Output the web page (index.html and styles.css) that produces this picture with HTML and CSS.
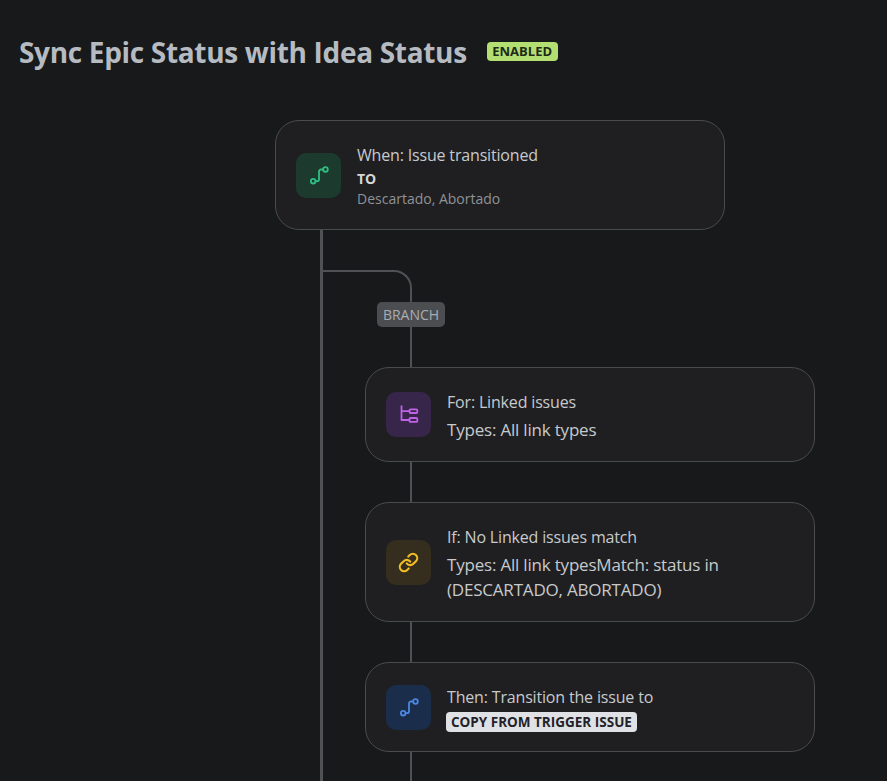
FILE: index.html
```html
<!DOCTYPE html>
<html lang="en">
<head>
    <meta charset="UTF-8">
    <meta name="viewport" content="width=device-width, initial-scale=1.0">
    <title>Sync Epic Status with Idea Status</title>
    <link rel="stylesheet" href="styles.css">
</head>
<body>
    <div class="header">
        <h1 class="title">Sync Epic Status with Idea Status</h1>
        <span class="status">ENABLED</span>
    </div>

    <div class="flow">
        <div class="card card-trigger">
            <div class="icon icon-green">
                <svg viewBox="0 0 24 24" width="24" height="24"><circle cx="6.2" cy="18.2" r="2.3"/><circle cx="18.5" cy="6.5" r="2.3"/><path d="M8.5 18.2H10a2 2 0 0 0 2-2V8.500a2 2 0 0 1 2-2h2.200"/></svg>
            </div>
            <div class="card-text">
                <div class="line">When: Issue transitioned</div>
                <div class="label">TO</div>
                <div class="muted">Descartado, Abortado</div>
            </div>
        </div>

        <div class="trunk">
            <div class="branch">
                <div class="branch-curve"></div>
                <div class="branch-tag"><span class="tag">BRANCH</span></div>
                <div class="link"></div>

                <div class="card card-for">
                    <div class="icon icon-purple">
                        <svg viewBox="0 0 24 24" width="24" height="24"><path d="M4.5 3.200V17h8M4.5 8.200h8"/><rect x="12.5" y="6.400" width="7.800" height="3.600" rx="1"/><rect x="12.5" y="15" width="7.800" height="3.900" rx="1"/></svg>
                    </div>
                    <div class="card-text">
                        <div class="line">For: Linked issues</div>
                        <div class="line detail">Types: All link types</div>
                    </div>
                </div>
                <div class="link"></div>

                <div class="card card-if">
                    <div class="icon icon-yellow">
                        <svg class="icon-chain" viewBox="0 0 24 24" width="21" height="21"><path d="M10 13a5 5 0 0 0 7.54.54l3-3a5 5 0 0 0-7.07-7.07l-1.72 1.71"/><path d="M14 11a5 5 0 0 0-7.54-.54l-3 3a5 5 0 0 0 7.07 7.07l1.71-1.71"/></svg>
                    </div>
                    <div class="card-text">
                        <div class="line">If: No Linked issues match</div>
                        <div class="line detail">Types: All link typesMatch: status in (DESCARTADO, ABORTADO)</div>
                    </div>
                </div>
                <div class="link"></div>

                <div class="card card-then">
                    <div class="icon icon-blue">
                        <svg viewBox="0 0 24 24" width="24" height="24"><circle cx="6.2" cy="18.2" r="2.3"/><circle cx="18.5" cy="6.5" r="2.3"/><path d="M8.5 18.2H10a2 2 0 0 0 2-2V8.500a2 2 0 0 1 2-2h2.200"/></svg>
                    </div>
                    <div class="card-text">
                        <div class="line">Then: Transition the issue to</div>
                        <span class="lozenge">COPY FROM TRIGGER ISSUE</span>
                    </div>
                </div>
                <div class="link link-end"></div>
            </div>
        </div>
    </div>
</body>
</html>
```

FILE: styles.css
```css
body {
    font-family: "Open Sans", "Noto Sans", sans-serif;
    background-color: #18191b;
    color: #c7cacd;
    margin: 0;
}
.header {
    display: flex;
    align-items: center;
    gap: 20px;
    height: 40px;
    padding: 32px 0 0 19px;
    margin-bottom: 48px;
}
.title {
    font-size: 28px;
    font-weight: 700;
    letter-spacing: -0.32px;
    color: #b6bbc1;
    margin: 0;
}
.status {
    background: #b3df72;
    color: #1e2a16;
    font-size: 13px;
    font-weight: 700;
    line-height: 19px;
    padding: 0 5.5px;
    border-radius: 4px;
    margin-top: -2px;
}
.flow {
    margin-left: 275px;
}
.card {
    display: flex;
    align-items: center;
    gap: 16px;
    box-sizing: border-box;
    width: 450px;
    padding: 0 20px;
    background: #1f1f21;
    border: 1px solid #4a4b4d;
    border-radius: 24px;
}
.card-trigger { height: 110px; }
.card-for { height: 95px; }
.card-if { height: 120px; }
.card-then { height: 90px; }
.icon {
    flex: none;
    width: 45px;
    height: 45px;
    border-radius: 10px;
    display: flex;
    align-items: center;
    justify-content: center;
}
.icon svg {
    fill: none;
    stroke: currentColor;
    stroke-width: 1.8;
    stroke-linecap: round;
    stroke-linejoin: round;
}
.icon .icon-chain {
    stroke-width: 2.4;
}
.icon-green { background: #1c3a2d; color: #2fbf83; }
.icon-purple { background: #37264a; color: #c061e8; }
.icon-yellow { background: #352e1e; color: #f2bd24; }
.icon-blue { background: #1a2d4a; color: #4c86e0; }
.card-text {
    font-size: 16px;
    letter-spacing: -0.17px;
    padding-top: 3px;
}
.card-trigger .card-text {
    padding-top: 1px;
}
.line {
    line-height: 25px;
}
.detail {
    font-size: 17px;
    letter-spacing: -0.2px;
    margin-top: 2px;
}
.label {
    font-size: 14px;
    font-weight: 700;
    line-height: 22px;
    letter-spacing: 0;
    color: #d4d6d8;
}
.muted {
    font-size: 14px;
    line-height: 18px;
    letter-spacing: 0;
    color: #8f9296;
}
.lozenge {
    display: inline-block;
    background: #dfe1e4;
    color: #1f2329;
    font-size: 13.5px;
    font-weight: 700;
    line-height: 20px;
    letter-spacing: 0;
    padding: 0 5px;
    margin-left: -1px;
    border-radius: 4px;
}
.trunk {
    margin-left: 45px;
    border-left: 3px solid #505154;
    padding-top: 40px;
}
.branch {
    margin-left: 42px;
}
.branch-curve {
    width: 87px;
    height: 30px;
    margin-left: -42px;
    border-top: 2px solid #505154;
    border-right: 2px solid #505154;
    border-top-right-radius: 18px;
}
.branch-tag {
    width: 2px;
    margin-left: 45px;
    display: flex;
    justify-content: center;
}
.tag {
    flex: none;
    background: #4c4d50;
    color: #a9adb3;
    font-size: 14px;
    line-height: 25px;
    padding: 0 6px;
    border-radius: 5px;
}
.link {
    width: 2px;
    height: 40px;
    margin-left: 45px;
    background: #505154;
}
.link-end {
    height: 29px;
}
```
